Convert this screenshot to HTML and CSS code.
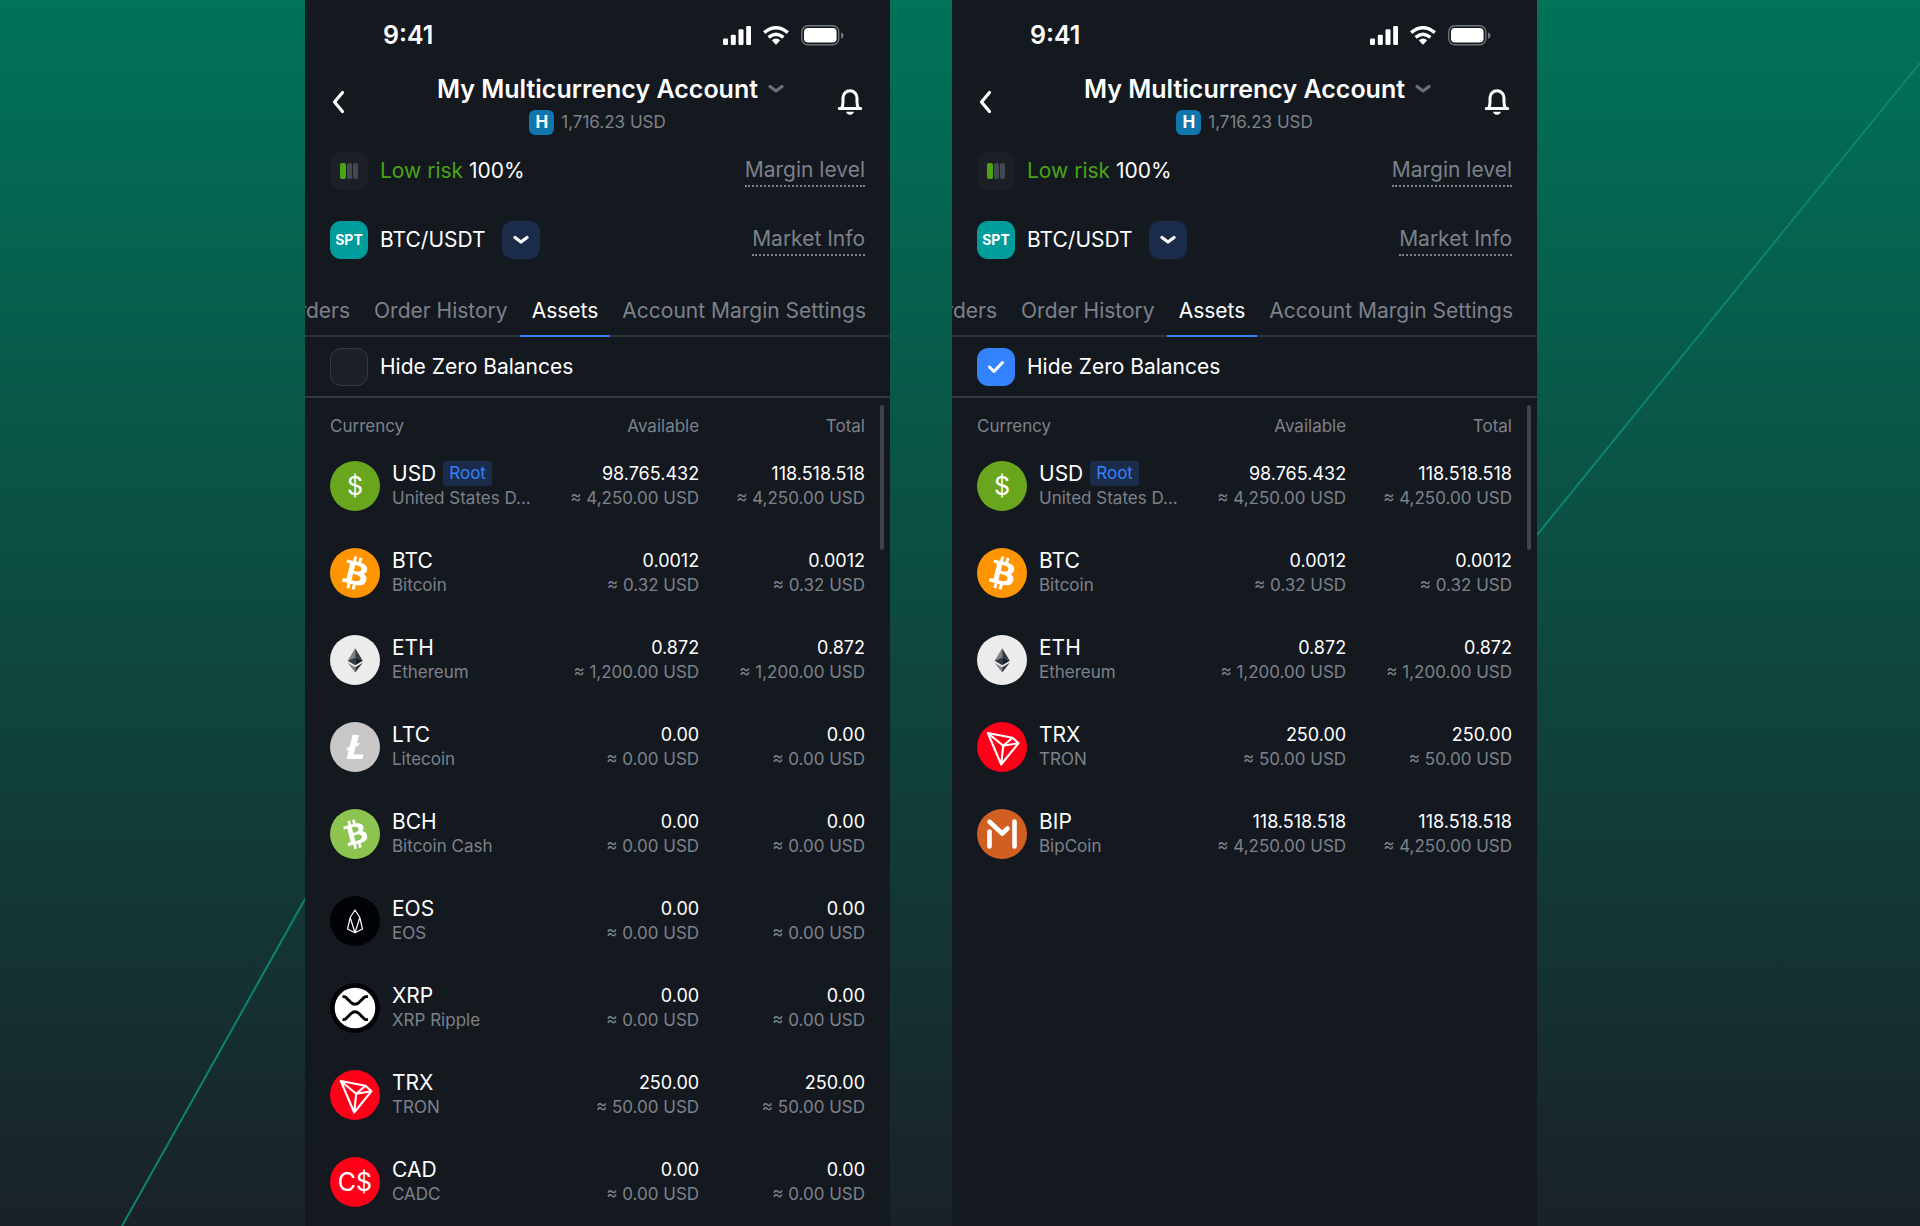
FILE: index.html
```html
<!DOCTYPE html>
<html lang="en">
<head>
<meta charset="utf-8">
<meta name="viewport" content="width=device-width, initial-scale=1">
<title>My Multicurrency Account</title>
<link rel="stylesheet" href="styles.css">
</head>
<body>
<svg class="sprite" width="0" height="0" aria-hidden="true">
  <symbol id="signal" viewBox="0 0 28 19"><g fill="#fff"><rect y="12.5" width="5" height="6.5" rx="1.2"/><rect x="7.8" y="8.7" width="5" height="10.3" rx="1.2"/><rect x="15.5" y="3.2" width="5" height="15.8" rx="1.2"/><rect x="23.2" width="5" height="19" rx="1.2"/></g></symbol>
  <symbol id="wifi" viewBox="0 0 26 19"><g fill="none" stroke="#fff" stroke-width="3.4"><path d="M1.2 6.6Q13-3.2 24.8 6.6"/><path d="M5.6 11.4Q13 5 20.4 11.4"/></g><path d="M8.8 14.2Q13 10.6 17.2 14.2L13.6 18.2Q13 18.8 12.4 18.2Z" fill="#fff"/></symbol>
  <symbol id="battery" viewBox="0 0 43 21"><rect x=".8" y=".8" width="37" height="19" rx="6" fill="none" stroke="#6f737a" stroke-width="1.4"/><rect x="3" y="3" width="32.6" height="14.6" rx="4" fill="#fff"/><path d="M40 7.2q2.6 1 2.6 3.3T40 13.8Z" fill="#6f737a"/></symbol>
  <symbol id="back" viewBox="0 0 16 24"><path d="M12.500 2.500 4.500 12l8 9.500" fill="none" stroke="#fff" stroke-width="3.200" stroke-linecap="round" stroke-linejoin="round"/></symbol>
  <symbol id="chevron" viewBox="0 0 16 10"><path d="M2 2.500 8 7l6-4.500" fill="none" stroke="currentColor" stroke-width="3.200" stroke-linecap="round" stroke-linejoin="round"/></symbol>
  <symbol id="bell" viewBox="0 0 28 28"><path d="M2.300 20.500H23.700M4.600 20.200Q6 18 6 14V9.800a7 7 0 0 1 14 0V14q0 4 1.400 6.200" fill="none" stroke="#fff" stroke-width="3" stroke-linecap="round" stroke-linejoin="round"/><path d="M9 23.700h8q-1 3-4 3t-4-3Z" fill="#fff"/></symbol>
  <symbol id="risk" viewBox="0 0 38 38"><rect x="10" y="11" width="6" height="16" rx="2" fill="#4aa316"/><rect x="17" y="11" width="5" height="16" rx="2" fill="#444851"/><rect x="23" y="11" width="5" height="16" rx="2" fill="#444851"/></symbol>
  <symbol id="bitcoin" viewBox="0 0 32 32"><path fill="#fff" d="M23.189 14.02c.314-2.096-1.283-3.223-3.465-3.975l.708-2.84-1.728-.43-.69 2.765c-.454-.114-.92-.22-1.385-.326l.695-2.783L15.596 6l-.708 2.839c-.376-.086-.746-.17-1.104-.26l.002-.009-2.384-.595-.46 1.846s1.283.294 1.256.312c.7.175.826.638.805 1.006l-.806 3.235c.048.012.11.03.18.057l-.183-.045-1.13 4.532c-.086.212-.303.531-.793.41.018.025-1.256-.313-1.256-.313l-.858 1.978 2.25.561c.418.105.828.215 1.231.318l-.715 2.872 1.727.43.708-2.84c.472.127.93.245 1.378.357l-.706 2.828 1.728.43.715-2.866c2.948.558 5.164.333 6.097-2.333.752-2.146-.037-3.385-1.588-4.192 1.13-.26 1.98-1.003 2.207-2.538zm-3.95 5.538c-.533 2.147-4.148.986-5.32.695l.95-3.805c1.172.293 4.929.872 4.37 3.11zm.535-5.569c-.487 1.953-3.495.96-4.47.717l.86-3.45c.975.243 4.118.696 3.61 2.733z"/></symbol>
  <symbol id="btc" viewBox="0 0 50 50"><circle cx="25" cy="25" r="25" fill="#ff9500"/><use href="#bitcoin" x="-2" y="-2" width="54" height="54"/></symbol>
  <symbol id="bch" viewBox="0 0 50 50"><circle cx="25" cy="25" r="25" fill="#8dc44f"/><g transform="rotate(-28 25 25)"><use href="#bitcoin" x="1" y="1" width="48" height="48"/></g></symbol>
  <symbol id="eth" viewBox="0 0 50 50"><circle cx="25" cy="25" r="25" fill="#ececec"/><path fill="#828384" d="M25.200 13.200 17.600 25.800l7.600-3.500Z"/><path fill="#343b45" d="M25.200 13.200v9.100l7.600 3.500Z"/><path fill="#343b45" d="m17.600 25.800 7.600-3.500v8Z"/><path fill="#14202b" d="m32.800 25.800-7.600-3.500v8Z"/><path fill="#828384" d="m17.600 27.800 7.600 4.400v5.200Z"/><path fill="#343b45" d="m32.800 27.800-7.600 4.400v5.200Z"/></symbol>
  <symbol id="ltc" viewBox="0 0 50 50"><circle cx="25" cy="25" r="25" fill="#c8c6c7"/><path fill="#fff" d="M22.500 13h6.600l-2.400 8.600 3-1.100-.8 2.900-3 1.200-2.300 8h10L32.300 37H16.500l2.300-9.300-2.500.9.800-2.900 2.600-1Z"/></symbol>
  <symbol id="eos" viewBox="0 0 50 50"><circle cx="25" cy="25" r="25" fill="#010307"/><path d="m25 14-4.800 7.500L17.500 33l7.500 3.800 7.500-3.800-2.700-11.500ZM20.200 21.500 25 36.800l4.800-15.300" fill="none" stroke="#fff" stroke-width="1.200" stroke-linejoin="round"/></symbol>
  <symbol id="xrp" viewBox="0 0 50 50"><circle cx="25" cy="25" r="25" fill="#010307"/><circle cx="25" cy="25" r="20.300" fill="#fff"/><path d="M12.500 13.600h1.500q1 0 1.800.8l5 4.900q4.200 3.800 8.400 0l5-4.900q.8-.8 1.800-.8h2M12.500 36.600h1.500q1 0 1.800-.8l5-5q4.200-4 8.400 0l5 5q.8.800 1.800.8h2" fill="none" stroke="#010307" stroke-width="2.900"/></symbol>
  <symbol id="trx" viewBox="0 0 50 50"><circle cx="25" cy="25" r="25" fill="#ff0019"/><path d="m10.800 11 24.700 4.700 6 5.500L24.200 42.500ZM10.800 11l15.400 12.800-2 18.700M26.200 23.800l9.300-8.100M26.200 23.800l15.300-2.600" fill="none" stroke="#fff" stroke-width="2.100" stroke-linejoin="round"/></symbol>
  <symbol id="bip" viewBox="0 0 50 50"><circle cx="25" cy="25" r="25" fill="#d25f22"/><path d="M12.500 22.500V37.500M37.500 12.500V37.500M12.500 12.800 25.200 24.500 30.500 19.500" fill="none" stroke="#fff" stroke-width="4.600" stroke-linecap="round" stroke-linejoin="round"/></symbol>
</svg>

<main class="stage">
  <svg class="streak" viewBox="0 0 305 1226" preserveAspectRatio="none" aria-hidden="true"><path d="M122 1226 305 899"/></svg>

  <section class="phone">
    <div class="status"><span class="clock">9:41</span><span class="status-icons"><svg width="28" height="19"><use href="#signal"/></svg><svg width="26" height="19"><use href="#wifi"/></svg><svg width="43" height="21"><use href="#battery"/></svg></span></div>
    <header class="header">
      <button class="icon-button" type="button" aria-label="Back"><svg width="16" height="24"><use href="#back"/></svg></button>
      <div class="account">
        <button class="account-name" type="button"><span>My Multicurrency Account</span><svg width="16" height="10"><use href="#chevron"/></svg></button>
        <div class="account-balance"><span class="mode">H</span>1,716.23 USD</div>
      </div>
      <button class="icon-button end" type="button" aria-label="Notifications"><svg width="28" height="28"><use href="#bell"/></svg></button>
    </header>
    <div class="info">
      <div class="info-row"><span class="tile"><svg width="38" height="38"><use href="#risk"/></svg></span><span class="info-label"><span class="low">Low risk</span> 100%</span><a class="hint" href="#">Margin level</a></div>
      <div class="info-row"><span class="tile spot">SPT</span><span class="info-label">BTC/USDT</span><button class="tile select" type="button" aria-label="Select market"><svg width="16" height="10"><use href="#chevron"/></svg></button><a class="hint" href="#">Market Info</a></div>
    </div>
    <nav class="tabs"><a href="#">Orders</a><a href="#">Order History</a><a class="active" href="#">Assets</a><a href="#">Account Margin Settings</a></nav>
    <label class="filter"><input type="checkbox">Hide Zero Balances</label>
    <div class="assets">
      <table>
        <thead><tr><th class="currency">Currency</th><th>Available</th><th>Total</th></tr></thead>
        <tbody>
          <tr><td><div class="coin"><span class="symbol usd">$</span><div><b>USD<mark>Root</mark></b><small>United States D...</small></div></div></td><td>98.765.432<small>≈ 4,250.00 USD</small></td><td>118.518.518<small>≈ 4,250.00 USD</small></td></tr>
          <tr><td><div class="coin"><svg width="50" height="50"><use href="#btc"/></svg><div><b>BTC</b><small>Bitcoin</small></div></div></td><td>0.0012<small>≈ 0.32 USD</small></td><td>0.0012<small>≈ 0.32 USD</small></td></tr>
          <tr><td><div class="coin"><svg width="50" height="50"><use href="#eth"/></svg><div><b>ETH</b><small>Ethereum</small></div></div></td><td>0.872<small>≈ 1,200.00 USD</small></td><td>0.872<small>≈ 1,200.00 USD</small></td></tr>
          <tr><td><div class="coin"><svg width="50" height="50"><use href="#ltc"/></svg><div><b>LTC</b><small>Litecoin</small></div></div></td><td>0.00<small>≈ 0.00 USD</small></td><td>0.00<small>≈ 0.00 USD</small></td></tr>
          <tr><td><div class="coin"><svg width="50" height="50"><use href="#bch"/></svg><div><b>BCH</b><small>Bitcoin Cash</small></div></div></td><td>0.00<small>≈ 0.00 USD</small></td><td>0.00<small>≈ 0.00 USD</small></td></tr>
          <tr><td><div class="coin"><svg width="50" height="50"><use href="#eos"/></svg><div><b>EOS</b><small>EOS</small></div></div></td><td>0.00<small>≈ 0.00 USD</small></td><td>0.00<small>≈ 0.00 USD</small></td></tr>
          <tr><td><div class="coin"><svg width="50" height="50"><use href="#xrp"/></svg><div><b>XRP</b><small>XRP Ripple</small></div></div></td><td>0.00<small>≈ 0.00 USD</small></td><td>0.00<small>≈ 0.00 USD</small></td></tr>
          <tr><td><div class="coin"><svg width="50" height="50"><use href="#trx"/></svg><div><b>TRX</b><small>TRON</small></div></div></td><td>250.00<small>≈ 50.00 USD</small></td><td>250.00<small>≈ 50.00 USD</small></td></tr>
          <tr><td><div class="coin"><span class="symbol cad">C$</span><div><b>CAD</b><small>CADC</small></div></div></td><td>0.00<small>≈ 0.00 USD</small></td><td>0.00<small>≈ 0.00 USD</small></td></tr>
        </tbody>
      </table>
      <span class="scroll-thumb"></span>
    </div>
  </section>

  <div></div>

  <section class="phone">
    <div class="status"><span class="clock">9:41</span><span class="status-icons"><svg width="28" height="19"><use href="#signal"/></svg><svg width="26" height="19"><use href="#wifi"/></svg><svg width="43" height="21"><use href="#battery"/></svg></span></div>
    <header class="header">
      <button class="icon-button" type="button" aria-label="Back"><svg width="16" height="24"><use href="#back"/></svg></button>
      <div class="account">
        <button class="account-name" type="button"><span>My Multicurrency Account</span><svg width="16" height="10"><use href="#chevron"/></svg></button>
        <div class="account-balance"><span class="mode">H</span>1,716.23 USD</div>
      </div>
      <button class="icon-button end" type="button" aria-label="Notifications"><svg width="28" height="28"><use href="#bell"/></svg></button>
    </header>
    <div class="info">
      <div class="info-row"><span class="tile"><svg width="38" height="38"><use href="#risk"/></svg></span><span class="info-label"><span class="low">Low risk</span> 100%</span><a class="hint" href="#">Margin level</a></div>
      <div class="info-row"><span class="tile spot">SPT</span><span class="info-label">BTC/USDT</span><button class="tile select" type="button" aria-label="Select market"><svg width="16" height="10"><use href="#chevron"/></svg></button><a class="hint" href="#">Market Info</a></div>
    </div>
    <nav class="tabs"><a href="#">Orders</a><a href="#">Order History</a><a class="active" href="#">Assets</a><a href="#">Account Margin Settings</a></nav>
    <label class="filter"><input type="checkbox" checked>Hide Zero Balances</label>
    <div class="assets">
      <table>
        <thead><tr><th class="currency">Currency</th><th>Available</th><th>Total</th></tr></thead>
        <tbody>
          <tr><td><div class="coin"><span class="symbol usd">$</span><div><b>USD<mark>Root</mark></b><small>United States D...</small></div></div></td><td>98.765.432<small>≈ 4,250.00 USD</small></td><td>118.518.518<small>≈ 4,250.00 USD</small></td></tr>
          <tr><td><div class="coin"><svg width="50" height="50"><use href="#btc"/></svg><div><b>BTC</b><small>Bitcoin</small></div></div></td><td>0.0012<small>≈ 0.32 USD</small></td><td>0.0012<small>≈ 0.32 USD</small></td></tr>
          <tr><td><div class="coin"><svg width="50" height="50"><use href="#eth"/></svg><div><b>ETH</b><small>Ethereum</small></div></div></td><td>0.872<small>≈ 1,200.00 USD</small></td><td>0.872<small>≈ 1,200.00 USD</small></td></tr>
          <tr><td><div class="coin"><svg width="50" height="50"><use href="#trx"/></svg><div><b>TRX</b><small>TRON</small></div></div></td><td>250.00<small>≈ 50.00 USD</small></td><td>250.00<small>≈ 50.00 USD</small></td></tr>
          <tr><td><div class="coin"><svg width="50" height="50"><use href="#bip"/></svg><div><b>BIP</b><small>BipCoin</small></div></div></td><td>118.518.518<small>≈ 4,250.00 USD</small></td><td>118.518.518<small>≈ 4,250.00 USD</small></td></tr>
        </tbody>
      </table>
      <span class="scroll-thumb"></span>
    </div>
  </section>

  <svg class="streak" viewBox="0 0 383 1226" preserveAspectRatio="none" aria-hidden="true"><path d="M0 535 383 63"/></svg>
</main>
</body>
</html>
```
FILE: styles.css
```css
* { box-sizing: border-box; }

body {
  margin: 0;
  font-family: Inter, "Noto Sans", sans-serif;
  font-size: 21px;
  line-height: 30px;
  color: #fff;
}

button {
  margin: 0;
  padding: 0;
  border: 0;
  background: none;
  color: inherit;
  font: inherit;
  cursor: pointer;
}

a { color: #7d818a; text-decoration: none; }
svg { display: block; flex: none; }
.sprite { position: absolute; }

.stage {
  display: grid;
  grid-template-columns:
    minmax(0, 305fr) minmax(0, 585fr) minmax(0, 62fr)
    minmax(0, 585fr) minmax(0, 383fr);
  min-height: 100vh;
  background: linear-gradient(#007358, #1a2129);
}

.streak { width: 100%; height: 100%; }
.streak path {
  fill: none;
  stroke: #0c8570;
  stroke-width: 2px;
  vector-effect: non-scaling-stroke;
}

.phone { background: #141920; overflow: hidden; }

/* Status bar */
.status {
  display: flex;
  align-items: center;
  justify-content: space-between;
  height: 70px;
  padding: 0 46px 0 78px;
}
.clock { font-size: 25px; font-weight: 600; }
.status-icons { display: flex; align-items: center; gap: 12px; }

/* Header */
.header {
  display: flex;
  align-items: flex-start;
  padding: 4px 25px 17px;
}
.icon-button {
  display: flex;
  align-items: center;
  width: 40px;
  height: 56px;
}
.icon-button.end { justify-content: flex-end; }
.account { flex: 1; }
.account-name {
  display: grid;
  grid-template-columns: 1fr auto 1fr;
  align-items: center;
  column-gap: 10px;
  width: 100%;
  font-size: 25px;
  font-weight: 600;
  line-height: 30px;
}
.account-name span { grid-column: 2; white-space: nowrap; }
.account-name svg { color: #6b6f78; }
.account-balance {
  display: flex;
  align-items: center;
  justify-content: center;
  gap: 7px;
  margin-top: 6px;
  font-size: 17px;
  line-height: 25px;
  color: #7d818a;
}
.mode {
  width: 25px;
  border-radius: 6px;
  background: #1077ad;
  color: #fff;
  font-weight: 700;
  text-align: center;
}

/* Risk and market rows */
.info {
  display: flex;
  flex-direction: column;
  gap: 31px;
  padding: 0 25px 28px;
}
.info-row { display: flex; align-items: center; }
.tile {
  display: flex;
  align-items: center;
  justify-content: center;
  width: 38px;
  height: 38px;
  border-radius: 11px;
  background: #1b2027;
}
.spot {
  background: #009b9b;
  font-size: 14px;
  font-weight: 700;
}
.select { margin-left: 16px; background: #1b2c4b; }
.info-label { margin-left: 12px; }
.low { color: #4aa316; }
.hint {
  margin-left: auto;
  border-bottom: 2px dotted #7d818a;
}

/* Tabs */
.tabs {
  display: flex;
  justify-content: flex-end;
  padding-right: 12px;
  overflow: hidden;
  box-shadow: inset 0 -2px #2c3138;
}
.tabs a {
  padding: 0 12px;
  border-bottom: 2px solid transparent;
  line-height: 48px;
  white-space: nowrap;
}
.tabs .active { color: #fff; border-color: #3582ff; }

/* Zero-balance filter */
.filter {
  display: flex;
  align-items: center;
  gap: 12px;
  height: 61px;
  padding: 0 25px;
  border-bottom: 2px solid #343840;
}
.filter input {
  appearance: none;
  width: 38px;
  height: 38px;
  margin: 0;
  border: 1px solid #353941;
  border-radius: 11px;
  background: #1b2027;
}
.filter input:checked {
  border-color: #3582ff;
  background: #3582ff url("data:image/svg+xml,%3Csvg xmlns='http://www.w3.org/2000/svg' width='18' height='14'%3E%3Cpath d='M2.500 7 7 11.500 15.500 2.500' fill='none' stroke='white' stroke-width='3' stroke-linecap='round' stroke-linejoin='round'/%3E%3C/svg%3E") center no-repeat;
}

/* Asset list */
.assets { position: relative; padding: 0 25px; }
table {
  width: 100%;
  border-collapse: collapse;
  table-layout: fixed;
}
th, td { padding: 0; text-align: right; white-space: nowrap; }
th {
  width: 31%;
  height: 44px;
  padding-top: 11px;
  color: #7d818a;
  font-size: 17px;
  font-weight: 400;
}
th.currency { width: 38%; text-align: left; }
td { height: 87px; font-size: 18px; line-height: 25px; }
small { display: block; color: #7d818a; font-size: 17px; }
.coin {
  display: flex;
  align-items: center;
  gap: 12px;
  text-align: left;
}
.coin b {
  display: flex;
  gap: 7px;
  font-size: 21px;
  font-weight: 400;
}
mark {
  padding: 0 6px;
  border-radius: 3px;
  background: #1b2c4b;
  color: #3582ff;
  font-size: 17px;
}
.symbol {
  flex: none;
  width: 50px;
  border-radius: 50%;
  font-size: 25px;
  line-height: 50px;
  text-align: center;
}
.usd { background: #6aa51e; }
.cad { background: #ff0019; }

.scroll-thumb {
  position: absolute;
  top: 7px;
  right: 6px;
  width: 4px;
  height: 145px;
  border-radius: 2px;
  background: #40444c;
}
```
